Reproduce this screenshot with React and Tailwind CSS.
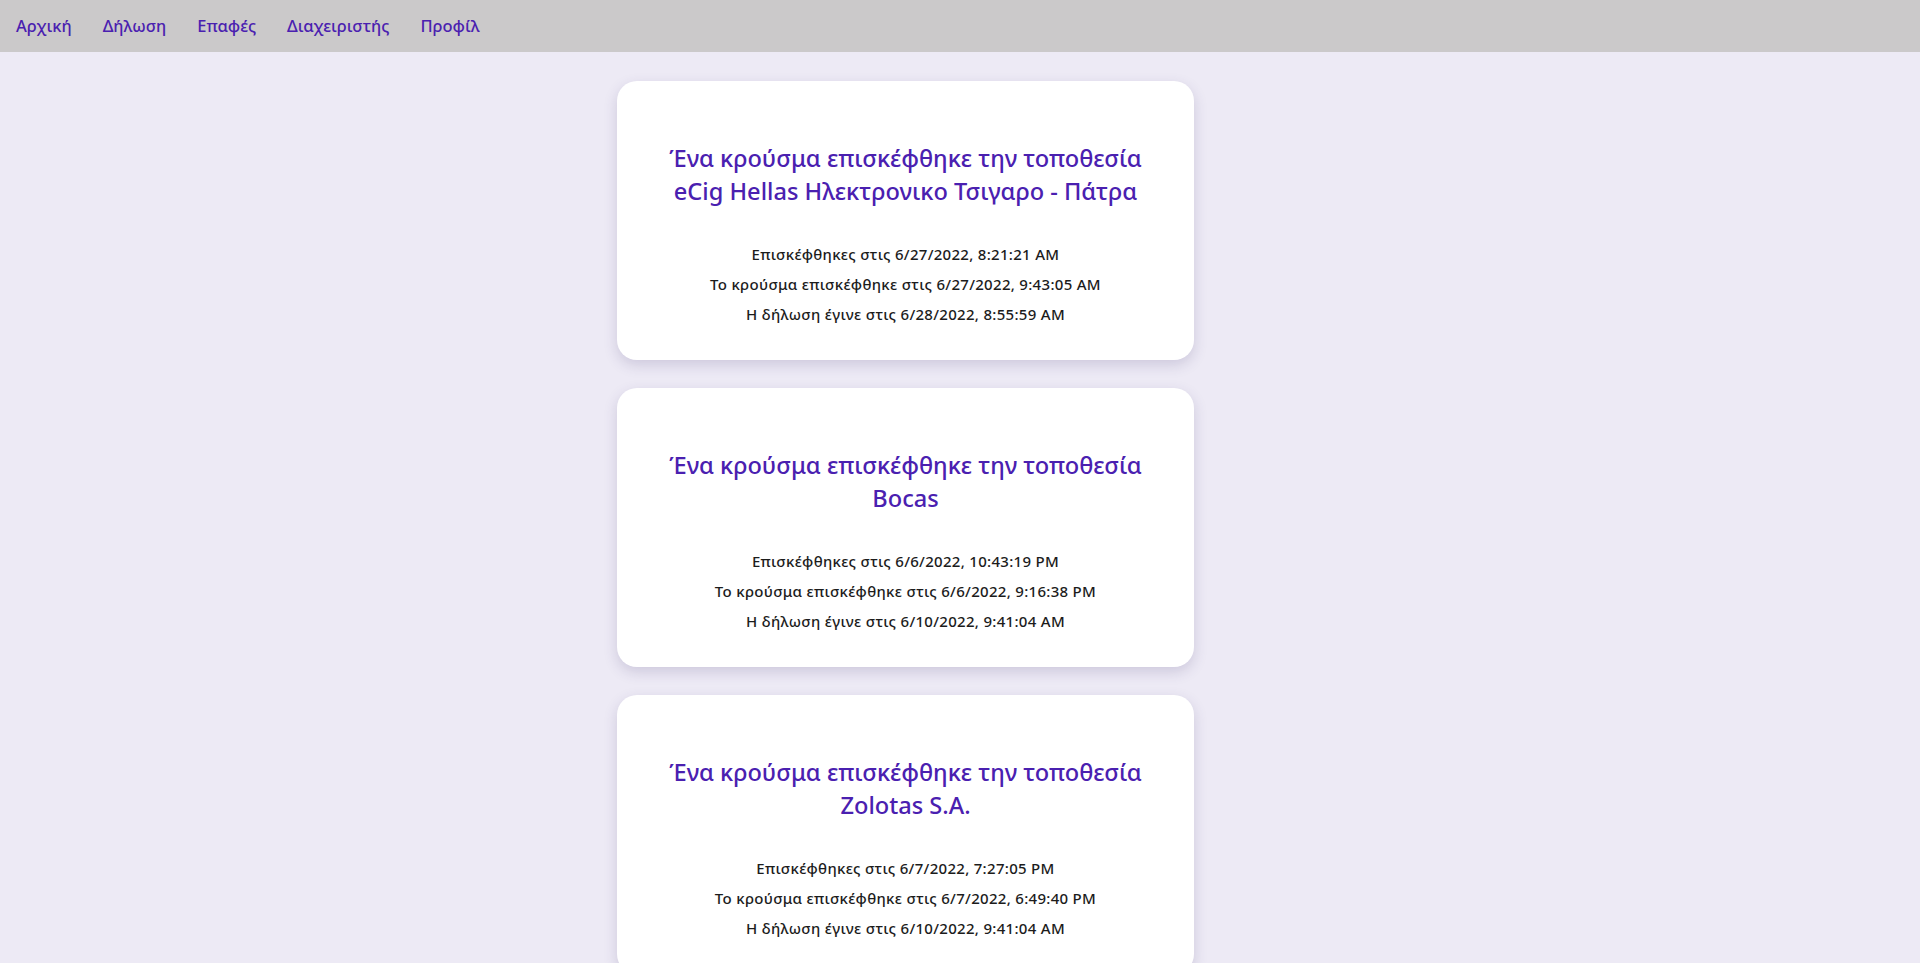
import React from 'react';

const cases = [
  {
    place: 'eCig Hellas Ηλεκτρονικο Τσιγαρο - Πάτρα',
    visited: '6/27/2022, 8:21:21 AM',
    caseVisited: '6/27/2022, 9:43:05 AM',
    declared: '6/28/2022, 8:55:59 AM',
  },
  {
    place: 'Bocas',
    visited: '6/6/2022, 10:43:19 PM',
    caseVisited: '6/6/2022, 9:16:38 PM',
    declared: '6/10/2022, 9:41:04 AM',
  },
  {
    place: 'Zolotas S.A.',
    visited: '6/7/2022, 7:27:05 PM',
    caseVisited: '6/7/2022, 6:49:40 PM',
    declared: '6/10/2022, 9:41:04 AM',
  },
  {
    place: 'Κέντρο Υγείας Πατρών',
    visited: '6/5/2022, 11:12:44 AM',
    caseVisited: '6/5/2022, 12:03:10 PM',
    declared: '6/10/2022, 9:41:04 AM',
  },
];

const links = ['Αρχική', 'Δήλωση', 'Επαφές', 'Διαχειριστής', 'Προφίλ'];

const CaseCard = ({ item }) => (
  <div className="w-[577px] bg-white rounded-[20px] shadow-[0_5px_14px_rgba(60,50,110,0.18)] pt-[61px] pb-[31px] px-8 text-center">
    <h2 className="text-[23.6px] leading-[33px] font-medium text-[#4a20b0]">
      Ένα κρούσμα επισκέφθηκε την τοποθεσία
      <br />
      {item.place}
    </h2>
    <div className="mt-[31px] text-[15px] leading-[30px] font-medium tracking-[0.3px] text-[#1c1c1c]">
      <p>Επισκέφθηκες στις {item.visited}</p>
      <p>Το κρούσμα επισκέφθηκε στις {item.caseVisited}</p>
      <p>Η δήλωση έγινε στις {item.declared}</p>
    </div>
  </div>
);

const App = () => {
  return (
    <div className="min-h-screen bg-[#edeaf5] font-['Noto_Sans','DejaVu_Sans',sans-serif]">
      <nav className="h-[52px] bg-[#cbc9ca] flex items-center pl-4">
        {links.map((l) => (
          <a key={l} href="#" className="text-[16.5px] font-medium text-[#4a20b0] mr-[31px]">
            {l}
          </a>
        ))}
      </nav>
      <main className="pl-[617px] pt-[29px] pb-8 flex flex-col gap-[28px]">
        {cases.map((c, i) => (
          <CaseCard key={i} item={c} />
        ))}
      </main>
    </div>
  );
};

export default App;
